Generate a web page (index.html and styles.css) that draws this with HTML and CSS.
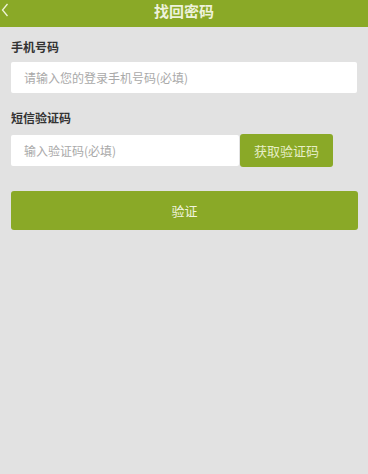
FILE: index.html
```html
<!DOCTYPE html>
<html lang="zh">
<head>
<meta charset="utf-8">
<title>找回密码</title>
<link rel="stylesheet" href="styles.css">
</head>
<body>
<header class="topbar">
  <span class="back"><svg width="8" height="14" viewBox="0 0 8 14"><path d="M6.5 1 L1.5 7 L6.5 13" fill="none" stroke="#eef3d8" stroke-width="1.3"/></svg></span>
  <h1 class="title">找回密码</h1>
</header>
<main class="form">
  <div class="field">
    <div class="label">手机号码</div>
    <div class="input">请输入您的登录手机号码(必填)</div>
  </div>
  <div class="field">
    <div class="label">短信验证码</div>
    <div class="row">
      <div class="input grow">输入验证码(必填)</div>
      <div class="code-btn">获取验证码</div>
    </div>
  </div>
  <div class="submit">验证</div>
</main>
</body>
</html>
```
FILE: styles.css
```css
* { box-sizing: border-box; }
html, body { margin: 0; padding: 0; }
body {
  width: 368px;
  height: 474px;
  background: #e2e2e2;
  font-family: "Noto Sans CJK SC", "Noto Sans", sans-serif;
  overflow: hidden;
}
.topbar {
  height: 27px;
  background: #8aa927;
  display: flex;
  align-items: center;
  justify-content: center;
  position: relative;
}
.back {
  position: absolute;
  left: 1px;
  top: 3px;
  display: flex;
}
.title {
  margin: 0;
  font-size: 15px;
  font-weight: bold;
  color: #eef2dc;
  line-height: 20px;
  margin-top: -5px;
}
.form {
  padding: 12px 11px 0 11px;
  display: flex;
  flex-direction: column;
}
.field { display: flex; flex-direction: column; }
.label {
  font-size: 12px;
  font-weight: bold;
  color: #333;
  line-height: 16px;
  height: 16px;
  margin-bottom: 7px;
}
.field + .field { margin-top: 17px; }
.field + .field .label { margin-bottom: 8px; }
.input {
  background: #fff;
  height: 31px;
  border-radius: 2px;
  font-size: 12px;
  color: #a9a9a9;
  padding-left: 13px;
  display: flex;
  align-items: center;
  width: 346px;
}
.row { display: flex; align-items: center; }
.input.grow { width: 228px; }
.code-btn {
  margin-left: 1px;
  width: 93px;
  height: 33px;
  background: #8aa927;
  border-radius: 3px;
  color: #e6eec6;
  font-size: 13px;
  display: flex;
  align-items: center;
  justify-content: center;
}
.submit {
  margin-top: 24px;
  width: 347px;
  height: 39px;
  background: #8aa927;
  border-radius: 3px;
  color: #f0f4de;
  font-size: 13px;
  display: flex;
  align-items: center;
  justify-content: center;
}
```
